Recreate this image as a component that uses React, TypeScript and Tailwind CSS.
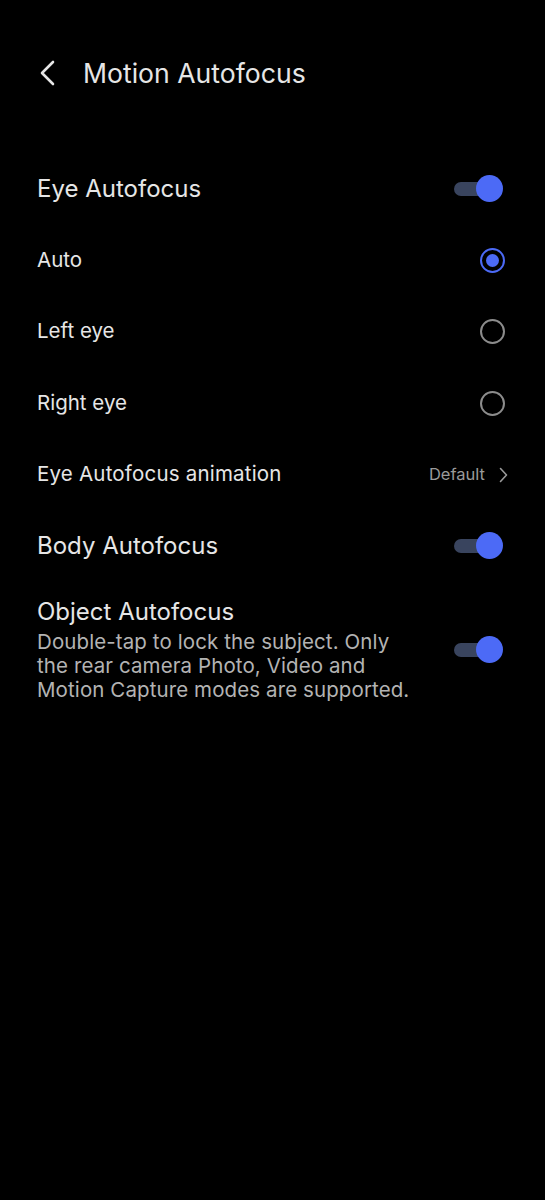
import React, { useState } from 'react';

const Toggle = ({ on, onChange }: { on: boolean; onChange: () => void }) => (
    <button onClick={onChange} className="relative w-[50px] h-[28px] shrink-0">
        <span className={`absolute left-[1px] right-[8px] top-[7px] h-[14px] rounded-full ${on ? 'bg-[#39445e]' : 'bg-[#3a3a3a]'}`} />
        <span
            className={`absolute top-[0px] w-[27px] h-[27px] rounded-full ${on ? 'right-[0px] bg-[#4c6af6]' : 'left-[0px] bg-[#9a9a9a]'}`}
        />
    </button>
);

const Radio = ({ checked }: { checked: boolean }) => (
    <span
        className={`flex items-center justify-center w-[25px] h-[25px] rounded-full border-2 ${checked ? 'border-[#4c6af6]' : 'border-[#8c8c8c]'}`}
    >
        {checked && <span className="w-[13px] h-[13px] rounded-full bg-[#4c6af6]" />}
    </span>
);

const App = () => {
    const [eye, setEye] = useState(true);
    const [body, setBody] = useState(true);
    const [object, setObject] = useState(true);
    const [mode, setMode] = useState('auto');

    const modes = [
        { id: 'auto', label: 'Auto' },
        { id: 'left', label: 'Left eye' },
        { id: 'right', label: 'Right eye' },
    ];

    return (
        <div className="min-h-[1200px] w-full bg-black text-[#e6e6e6] pt-[45px]" style={{ fontFamily: 'Inter, "Noto Sans", sans-serif' }}>
            <div className="flex items-center h-[56px] pl-[38px]">
                <svg width="20" height="26" viewBox="0 0 20 26" className="shrink-0">
                    <path d="M15 2 L4 13 L15 24" fill="none" stroke="#e6e6e6" strokeWidth="2.6" strokeLinecap="round" strokeLinejoin="round" />
                </svg>
                <h1 className="ml-[25px] text-[26.6px] leading-none">Motion Autofocus</h1>
            </div>

            <div className="mt-[52px] px-[37px]">
                <div className="flex items-center justify-between h-[71.5px] pr-[5px]">
                    <span className="text-[24px]">Eye Autofocus</span>
                    <Toggle on={eye} onChange={() => setEye(!eye)} />
                </div>

                {modes.map((m) => (
                    <div
                        key={m.id}
                        onClick={() => setMode(m.id)}
                        className="flex items-center justify-between h-[71.5px] pr-[2px] cursor-pointer"
                    >
                        <span className="text-[20.5px]">{m.label}</span>
                        <span className="w-[28px] flex justify-center">
                            <Radio checked={mode === m.id} />
                        </span>
                    </div>
                ))}

                <div className="flex items-center justify-between h-[71.5px]">
                    <span className="text-[20.5px] tracking-[0.2px]">Eye Autofocus animation</span>
                    <span className="flex items-center gap-[14px]">
                        <span className="text-[16.5px] text-[#9a9a9a]">Default</span>
                        <svg width="9" height="16" viewBox="0 0 9 16">
                            <path d="M1.5 1.5 L7.5 8 L1.5 14.5" fill="none" stroke="#9a9a9a" strokeWidth="1.6" strokeLinecap="round" strokeLinejoin="round" />
                        </svg>
                    </span>
                </div>

                <div className="flex items-center justify-between h-[71.5px] pr-[5px]">
                    <span className="text-[24px]">Body Autofocus</span>
                    <Toggle on={body} onChange={() => setBody(!body)} />
                </div>

                <div className="flex items-center justify-between pt-[15px] pr-[5px]">
                    <div className="max-w-[380px]">
                        <div className="text-[24px] leading-[30px]">Object Autofocus</div>
                        <p className="mt-[3px] text-[20.5px] leading-[24px] tracking-[0.1px] text-[#b3b3b3]">
                            Double-tap to lock the subject. Only the rear camera Photo, Video and Motion Capture modes are supported.
                        </p>
                    </div>
                    <div className="mt-[6px]">
                        <Toggle on={object} onChange={() => setObject(!object)} />
                    </div>
                </div>
            </div>
        </div>
    );
};

export default App;
